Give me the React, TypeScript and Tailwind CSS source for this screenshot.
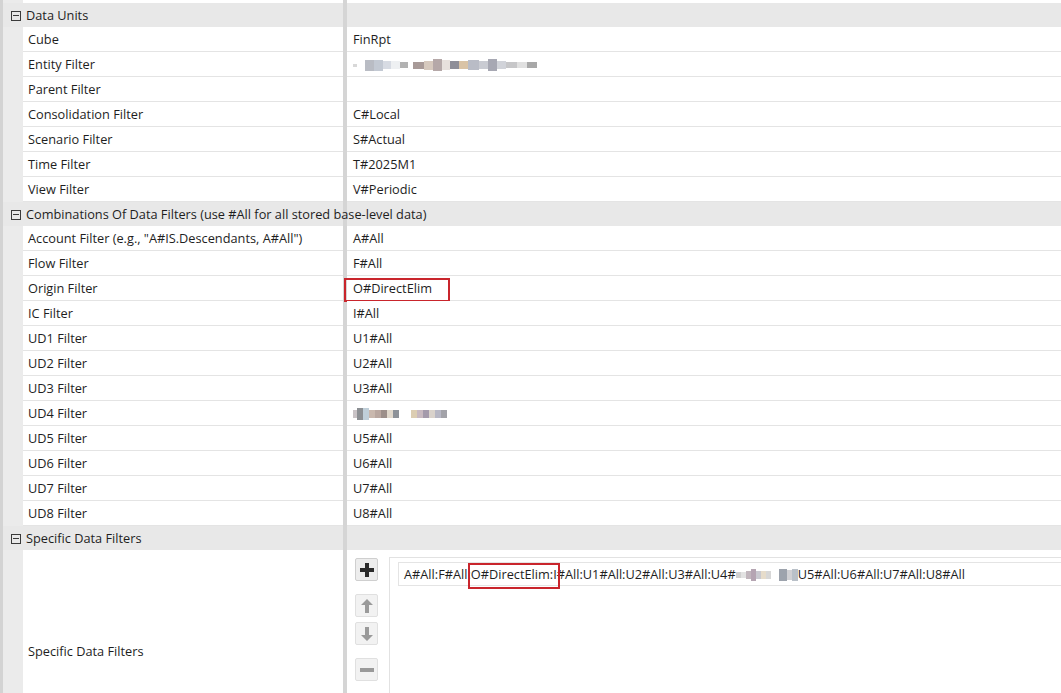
import React from "react";

const FONT = "font-['Open_Sans',sans-serif]";

function MinusBox() {
  return (
    <span className="relative inline-block shrink-0 w-[10px] h-[10px] border border-[#3a3a3a] bg-transparent">
      <span className="absolute left-[1px] right-[1px] top-[3.5px] h-[1px] bg-[#3a3a3a]" />
    </span>
  );
}

function Header({ title }: { title: string }) {
  return (
    <div className="flex h-[24px] shrink-0 bg-[#e8e8e8] relative">
      <div className="w-[340px] shrink-0" />
      <div className="w-[4px] shrink-0 bg-[#d5d5d5]" />
      <div className="flex-1" />
      <div className="absolute inset-0 flex items-center pl-[8px] pt-[1px] gap-[5px] whitespace-nowrap">
        <MinusBox />
        <span className="text-[12.75px] text-[#1e1e1e]">{title}</span>
      </div>
    </div>
  );
}

function Blur({ blocks }: { blocks: [number, string, number?][] }) {
  return (
    <span className="inline-flex items-center h-[13px] blur-[0.6px]">
      {blocks.map(([w, c, h], i) => (
        <span key={i} style={{ width: w, background: c, height: h ?? 8 }} className="inline-block" />
      ))}
    </span>
  );
}

function Row({
  label,
  value,
  highlight,
}: {
  label: string;
  value?: React.ReactNode;
  highlight?: boolean;
}) {
  return (
    <div className="flex h-[25px] shrink-0">
      <div className="w-[20px] shrink-0 bg-[#ebebeb]" />
      <div className="w-[320px] shrink-0 bg-white border-b border-[#e4e4e4] flex items-center pl-[5px] pt-[2px] text-[12.75px] text-[#1e1e1e] whitespace-nowrap">
        {label}
      </div>
      <div className="w-[4px] shrink-0 bg-[#d5d5d5]" />
      <div className="flex-1 bg-white border-b border-[#e4e4e4] flex items-center pl-[6px] pt-[2px] text-[12.75px] text-[#1e1e1e] whitespace-nowrap relative">
        {highlight && (
          <div className="absolute left-[-3px] top-[2px] w-[106px] h-[24px] border-2 border-[#c9252c]" />
        )}
        {value}
      </div>
    </div>
  );
}

function Btn({ children, active }: { children: React.ReactNode; active?: boolean }) {
  return (
    <div
      className={
        "w-[23px] h-[23px] shrink-0 rounded-[2px] flex items-center justify-center " +
        (active ? "bg-[#ededed] border border-[#cfcfcf]" : "bg-[#f2f2f2] border border-[#e0e0e0]")
      }
    >
      {children}
    </div>
  );
}

export default function App() {
  const rows1: [string, React.ReactNode?][] = [
    ["Cube", "FinRpt"],
    [
      "Entity Filter",
      <Blur
        blocks={[
          [4, "#d8d8d8", 3],
          [8, "#ffffff"],
          [9, "#b9bcc4", 11],
          [9, "#c3c9d3", 11],
          [8, "#d7dbe3"],
          [9, "#eef0f2"],
          [8, "#b2b2b2", 6],
          [5, "#fff"],
          [11, "#a89a98", 7],
          [9, "#d6c9be", 9],
          [9, "#b5a8a8", 12],
          [8, "#e7e0dc", 10],
          [9, "#8e8e98", 8],
          [9, "#d9c3a6", 8],
          [11, "#b9bcc6", 10],
          [9, "#c9cbd2", 8],
          [9, "#a7a8b3", 12],
          [9, "#d1d3d9", 8],
          [11, "#c6c6c8", 6],
          [10, "#e0e0e0", 6],
          [10, "#a8a8a8", 6],
        ]}
      />,
    ],
    ["Parent Filter", ""],
    ["Consolidation Filter", "C#Local"],
    ["Scenario Filter", "S#Actual"],
    ["Time Filter", "T#2025M1"],
    ["View Filter", "V#Periodic"],
  ];
  const rows2: [string, React.ReactNode?, boolean?][] = [
    ['Account Filter (e.g., "A#IS.Descendants, A#All")', "A#All"],
    ["Flow Filter", "F#All"],
    ["Origin Filter", "O#DirectElim", true],
    ["IC Filter", "I#All"],
    ["UD1 Filter", "U1#All"],
    ["UD2 Filter", "U2#All"],
    ["UD3 Filter", "U3#All"],
    [
      "UD4 Filter",
      <Blur
        blocks={[
          [4, "#c9c3c6"],
          [6, "#8c8f93", 12],
          [6, "#c0cfd9", 12],
          [6, "#c9b8ae"],
          [6, "#b9a7a0"],
          [6, "#9c8f8a"],
          [6, "#e0d8cc"],
          [6, "#8d9299"],
          [12, "#ffffff"],
          [6, "#dccdb2"],
          [6, "#c8b9c0"],
          [6, "#a49aab"],
          [6, "#d9d2cb"],
          [6, "#b7b7c4"],
          [6, "#a2a2a8"],
        ]}
      />,
    ],
    ["UD5 Filter", "U5#All"],
    ["UD6 Filter", "U6#All"],
    ["UD7 Filter", "U7#All"],
    ["UD8 Filter", "U8#All"],
  ];

  return (
    <div className={"w-[1061px] h-[693px] overflow-hidden bg-white flex " + FONT}>
      <div className="w-[3px] shrink-0 bg-[#d3d3d3]" />
      <div className="flex-1 flex flex-col">
        <div className="flex h-[3px] shrink-0">
          <div className="w-[20px] bg-[#ebebeb]" />
          <div className="w-[320px] bg-white" />
          <div className="w-[4px] bg-[#d5d5d5]" />
          <div className="flex-1 bg-white" />
        </div>
        <Header title="Data Units" />
        {rows1.map(([l, v]) => (
          <Row key={l} label={l} value={v} />
        ))}
        <Header title="Combinations Of Data Filters (use #All for all stored base-level data)" />
        {rows2.map(([l, v, h]) => (
          <Row key={l} label={l} value={v} highlight={h} />
        ))}
        <Header title="Specific Data Filters" />
        <div className="flex h-[202px] shrink-0">
          <div className="w-[20px] shrink-0 bg-[#ebebeb]" />
          <div className="w-[320px] shrink-0 bg-white flex items-center pl-[5px] pt-[2px] text-[12.75px] text-[#1e1e1e]">
            Specific Data Filters
          </div>
          <div className="w-[4px] shrink-0 bg-[#d5d5d5]" />
          <div className="flex-1 bg-white flex pl-[8px] pt-[8px] text-[12.75px] text-[#1e1e1e]">
            <div className="flex flex-col w-[23px] shrink-0">
              <Btn active>
                <svg width="14" height="14" viewBox="0 0 14 14">
                  <rect x="5" y="0" width="4" height="14" fill="#2b2b2b" />
                  <rect x="0" y="5" width="14" height="4" fill="#2b2b2b" />
                </svg>
              </Btn>
              <div className="h-[13px] shrink-0" />
              <Btn>
                <svg width="12" height="14" viewBox="0 0 12 14">
                  <path d="M6 0 L12 6 L8 6 L8 14 L4 14 L4 6 L0 6 Z" fill="#9a9a9a" />
                </svg>
              </Btn>
              <div className="h-[5px] shrink-0" />
              <Btn>
                <svg width="12" height="14" viewBox="0 0 12 14">
                  <path d="M6 14 L12 8 L8 8 L8 0 L4 0 L4 8 L0 8 Z" fill="#9a9a9a" />
                </svg>
              </Btn>
              <div className="h-[13px] shrink-0" />
              <Btn>
                <svg width="14" height="4" viewBox="0 0 14 4">
                  <rect x="0" y="0" width="14" height="4" fill="#9a9a9a" />
                </svg>
              </Btn>
            </div>
            <div className="ml-[11px] mt-[-1px] flex-1 border-l border-t border-[#e2e2e2] pl-[8px] pt-[4px]">
              <div className="h-[24px] border border-[#e4e4e4] border-r-0 flex items-center pl-[5px] pt-[2px] whitespace-nowrap">
                <span>A#All:F#All:</span>
                <span className="relative">
                  O#DirectElim:I
                  <span className="absolute left-[-3px] right-[-3px] top-[-2px] bottom-[-4px] border-2 border-[#c9252c]" />
                </span>
                <span>#All:U1#All:U2#All:U3#All:U4#</span>
                <Blur
                  blocks={[
                    [5, "#d0d0d0", 6],
                    [5, "#e2e2e2", 6],
                    [5, "#c1b6bd"],
                    [5, "#b5a5b2", 12],
                    [5, "#c9c9cf"],
                    [5, "#e6dccb"],
                    [5, "#d7d7d7"],
                    [8, "#ffffff"],
                    [8, "#9da3ad", 12],
                    [5, "#d0d0d4", 10],
                    [6, "#b9c0c8", 12],
                  ]}
                />
                <span>U5#All:U6#All:U7#All:U8#All</span>
              </div>
            </div>
          </div>
        </div>
      </div>
    </div>
  );
}
